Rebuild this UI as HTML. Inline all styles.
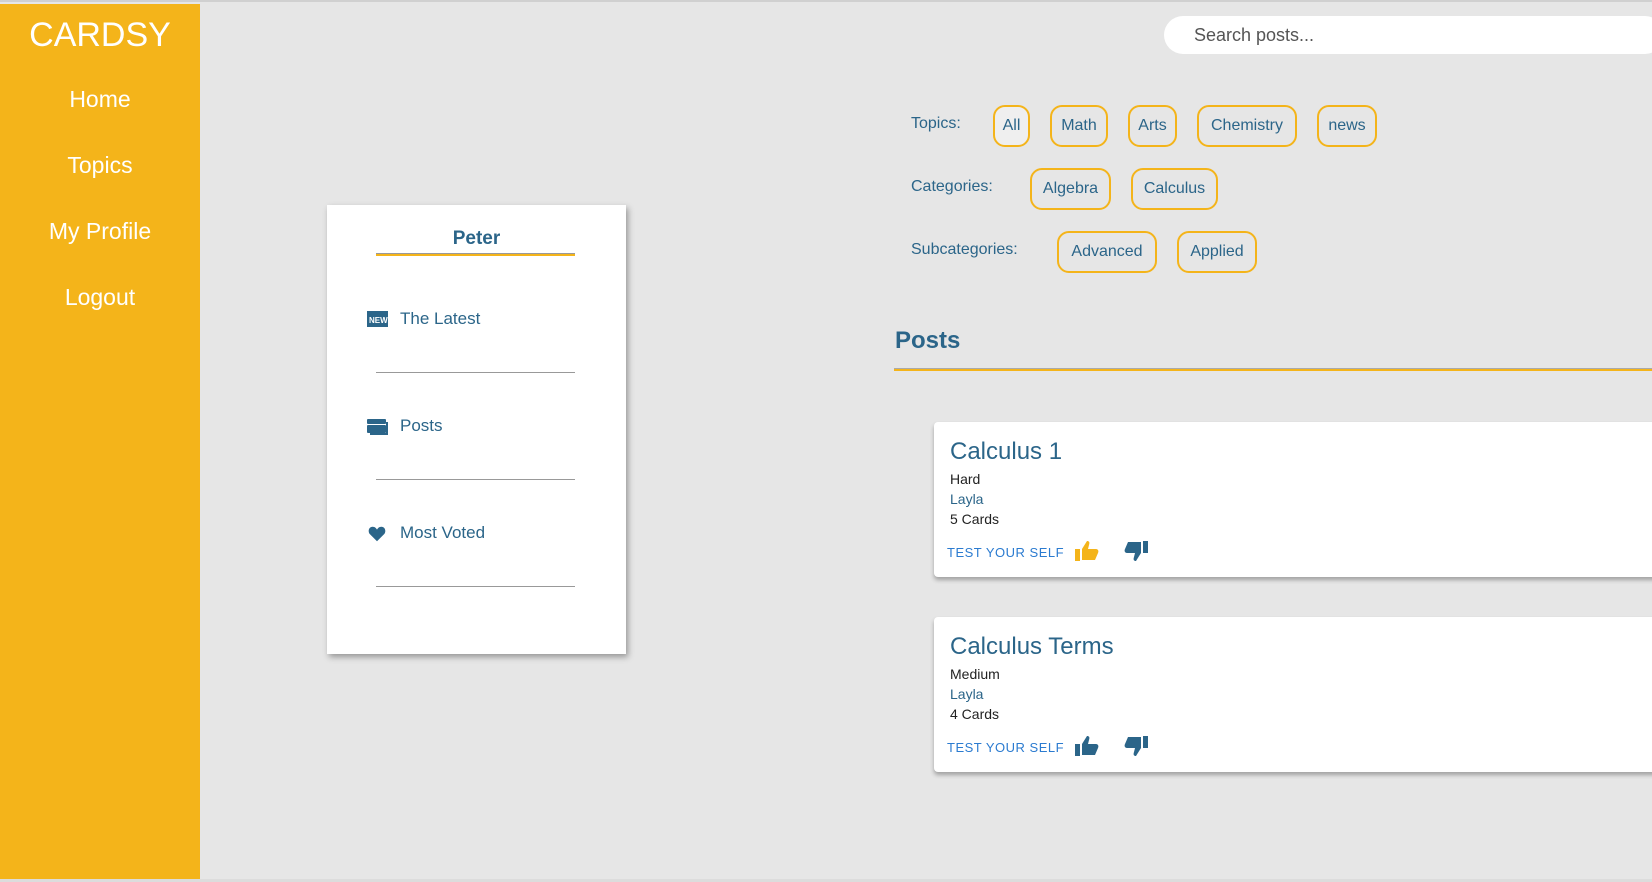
<!DOCTYPE html>
<html><head><style>
*{margin:0;padding:0;box-sizing:border-box}
body{width:1652px;height:880px;background:#e6e6e6;font-family:"Liberation Sans",sans-serif;position:relative;overflow:hidden;border-top:2px solid #d0d0d0}
.a{position:absolute;white-space:nowrap}
.side{position:absolute;left:0;top:2px;width:200px;height:875px;background:#f4b41a}
.nav{position:absolute;left:0;width:200px;text-align:center;color:#fff;font-size:23px}
.lbl{position:absolute;color:#2b6589;font-size:16px}
.chip{position:absolute;height:42px;border:2px solid #f4b41a;border-radius:12px;color:#2b6589;font-size:16px;display:flex;align-items:center;justify-content:center}
.card{position:absolute;left:934px;width:730px;height:155px;background:#fff;border-radius:4px;box-shadow:0 3px 4px rgba(0,0,0,.3)}
.t{position:absolute;left:16px;top:16px;font-size:24px;color:#2b6589}
.s{position:absolute;left:16px;font-size:14px;color:#222}
.ty{position:absolute;left:13px;top:123px;font-size:13px;color:#2b7bd0;letter-spacing:.5px}
.pi{position:absolute;left:41px;color:#2b6589;font-size:17px}
.ln{position:absolute;left:49px;width:199px;height:1px;background:#999}
</style></head><body>
<div class="side"></div>
<div class="a" style="left:0;top:877px;width:1652px;height:3px;background:#dcdcdc"></div>
<div class="nav" style="top:14px;font-size:34px">CARDSY</div>
<div class="nav" style="top:84px">Home</div>
<div class="nav" style="top:150px">Topics</div>
<div class="nav" style="top:216px">My Profile</div>
<div class="nav" style="top:282px">Logout</div>

<div class="a" style="left:1164px;top:14px;width:500px;height:38px;background:#fff;border-radius:19px"></div>
<div class="a" style="left:1194px;top:23px;font-size:18px;color:#555">Search posts...</div>

<div class="lbl" style="left:911px;top:113px">Topics:</div>
<div class="chip" style="left:993px;top:103px;width:37px;background:#efefef">All</div>
<div class="chip" style="left:1050px;top:103px;width:58px">Math</div>
<div class="chip" style="left:1128px;top:103px;width:49px">Arts</div>
<div class="chip" style="left:1197px;top:103px;width:100px">Chemistry</div>
<div class="chip" style="left:1317px;top:103px;width:60px">news</div>
<div class="lbl" style="left:911px;top:176px">Categories:</div>
<div class="chip" style="left:1030px;top:166px;width:81px">Algebra</div>
<div class="chip" style="left:1131px;top:166px;width:87px">Calculus</div>
<div class="lbl" style="left:911px;top:239px">Subcategories:</div>
<div class="chip" style="left:1057px;top:229px;width:100px">Advanced</div>
<div class="chip" style="left:1177px;top:229px;width:80px">Applied</div>

<div class="a" style="left:895px;top:325px;font-size:24px;font-weight:bold;color:#2b6589">Posts</div>
<div class="a" style="left:894px;top:366px;width:760px;height:3px;background:#f4b41a;border-top:1px solid #aaa"></div>

<div class="a" style="left:327px;top:203px;width:299px;height:449px;background:#fff;box-shadow:2px 3px 6px rgba(0,0,0,.35)">
<div class="a" style="left:0;width:299px;top:23px;text-align:center;font-weight:bold;font-size:19px;color:#2b6589">Peter</div>
<div class="a" style="left:49px;top:48px;width:199px;height:3px;background:#f4b41a;border-top:1px solid #999"></div>
<svg class="a" style="left:40px;top:106px" width="21" height="16"><rect width="21" height="16" fill="#2b6589"/><text x="2" y="12" font-size="8" fill="#fff" font-family="Liberation Sans" font-weight="bold">NEW</text></svg>
<div class="pi" style="left:73px;top:104px">The Latest</div>
<div class="ln" style="top:167px"></div>
<svg class="a" style="left:40px;top:213px" width="22" height="18"><rect x="0" y="1" width="19" height="5" rx="1" fill="#2b6589"/><rect x="0" y="7" width="19" height="8" rx="1" fill="#2b6589"/><path d="M20 4v12H3" stroke="#2b6589" stroke-width="2" fill="none"/></svg>
<div class="pi" style="left:73px;top:211px">Posts</div>
<div class="ln" style="top:274px"></div>
<svg class="a" style="left:41px;top:321px" width="18" height="16" viewBox="0 0 24 22"><path d="M12 21L2 11C-1 7 1 1 6 1c3 0 5 2 6 4 1-2 3-4 6-4 5 0 7 6 4 10z" fill="#2b6589"/></svg>
<div class="pi" style="left:73px;top:318px">Most Voted</div>
<div class="ln" style="top:381px"></div>
</div>

<div class="card" style="top:420px">
<div class="t">Calculus 1</div>
<div class="s" style="top:49px">Hard</div>
<div class="s" style="top:69px;color:#2b6589">Layla</div>
<div class="s" style="top:89px">5 Cards</div>
<div class="ty">TEST YOUR SELF</div>
<svg class="a" style="left:141px;top:119px" width="24" height="20" viewBox="0 0 24 20"><rect x="0" y="8" width="5" height="12" fill="#f4b41a"/><path d="M7 8l5-8c2 0 3 1 2 4l-1 4h8c2 0 3 2 2 4l-3 7H7z" fill="#f4b41a"/></svg>
<svg class="a" style="left:190px;top:119px" width="24" height="20" viewBox="0 0 24 20"><rect x="19" y="0" width="5" height="12" fill="#2b6589"/><path d="M17 12l-5 8c-2 0-3-1-2-4l1-4H3c-2 0-3-2-2-4l3-7h13z" fill="#2b6589"/></svg>
</div>
<div class="card" style="top:615px">
<div class="t">Calculus Terms</div>
<div class="s" style="top:49px">Medium</div>
<div class="s" style="top:69px;color:#2b6589">Layla</div>
<div class="s" style="top:89px">4 Cards</div>
<div class="ty">TEST YOUR SELF</div>
<svg class="a" style="left:141px;top:119px" width="24" height="20" viewBox="0 0 24 20"><rect x="0" y="8" width="5" height="12" fill="#2b6589"/><path d="M7 8l5-8c2 0 3 1 2 4l-1 4h8c2 0 3 2 2 4l-3 7H7z" fill="#2b6589"/></svg>
<svg class="a" style="left:190px;top:119px" width="24" height="20" viewBox="0 0 24 20"><rect x="19" y="0" width="5" height="12" fill="#2b6589"/><path d="M17 12l-5 8c-2 0-3-1-2-4l1-4H3c-2 0-3-2-2-4l3-7h13z" fill="#2b6589"/></svg>
</div>
</body></html>
